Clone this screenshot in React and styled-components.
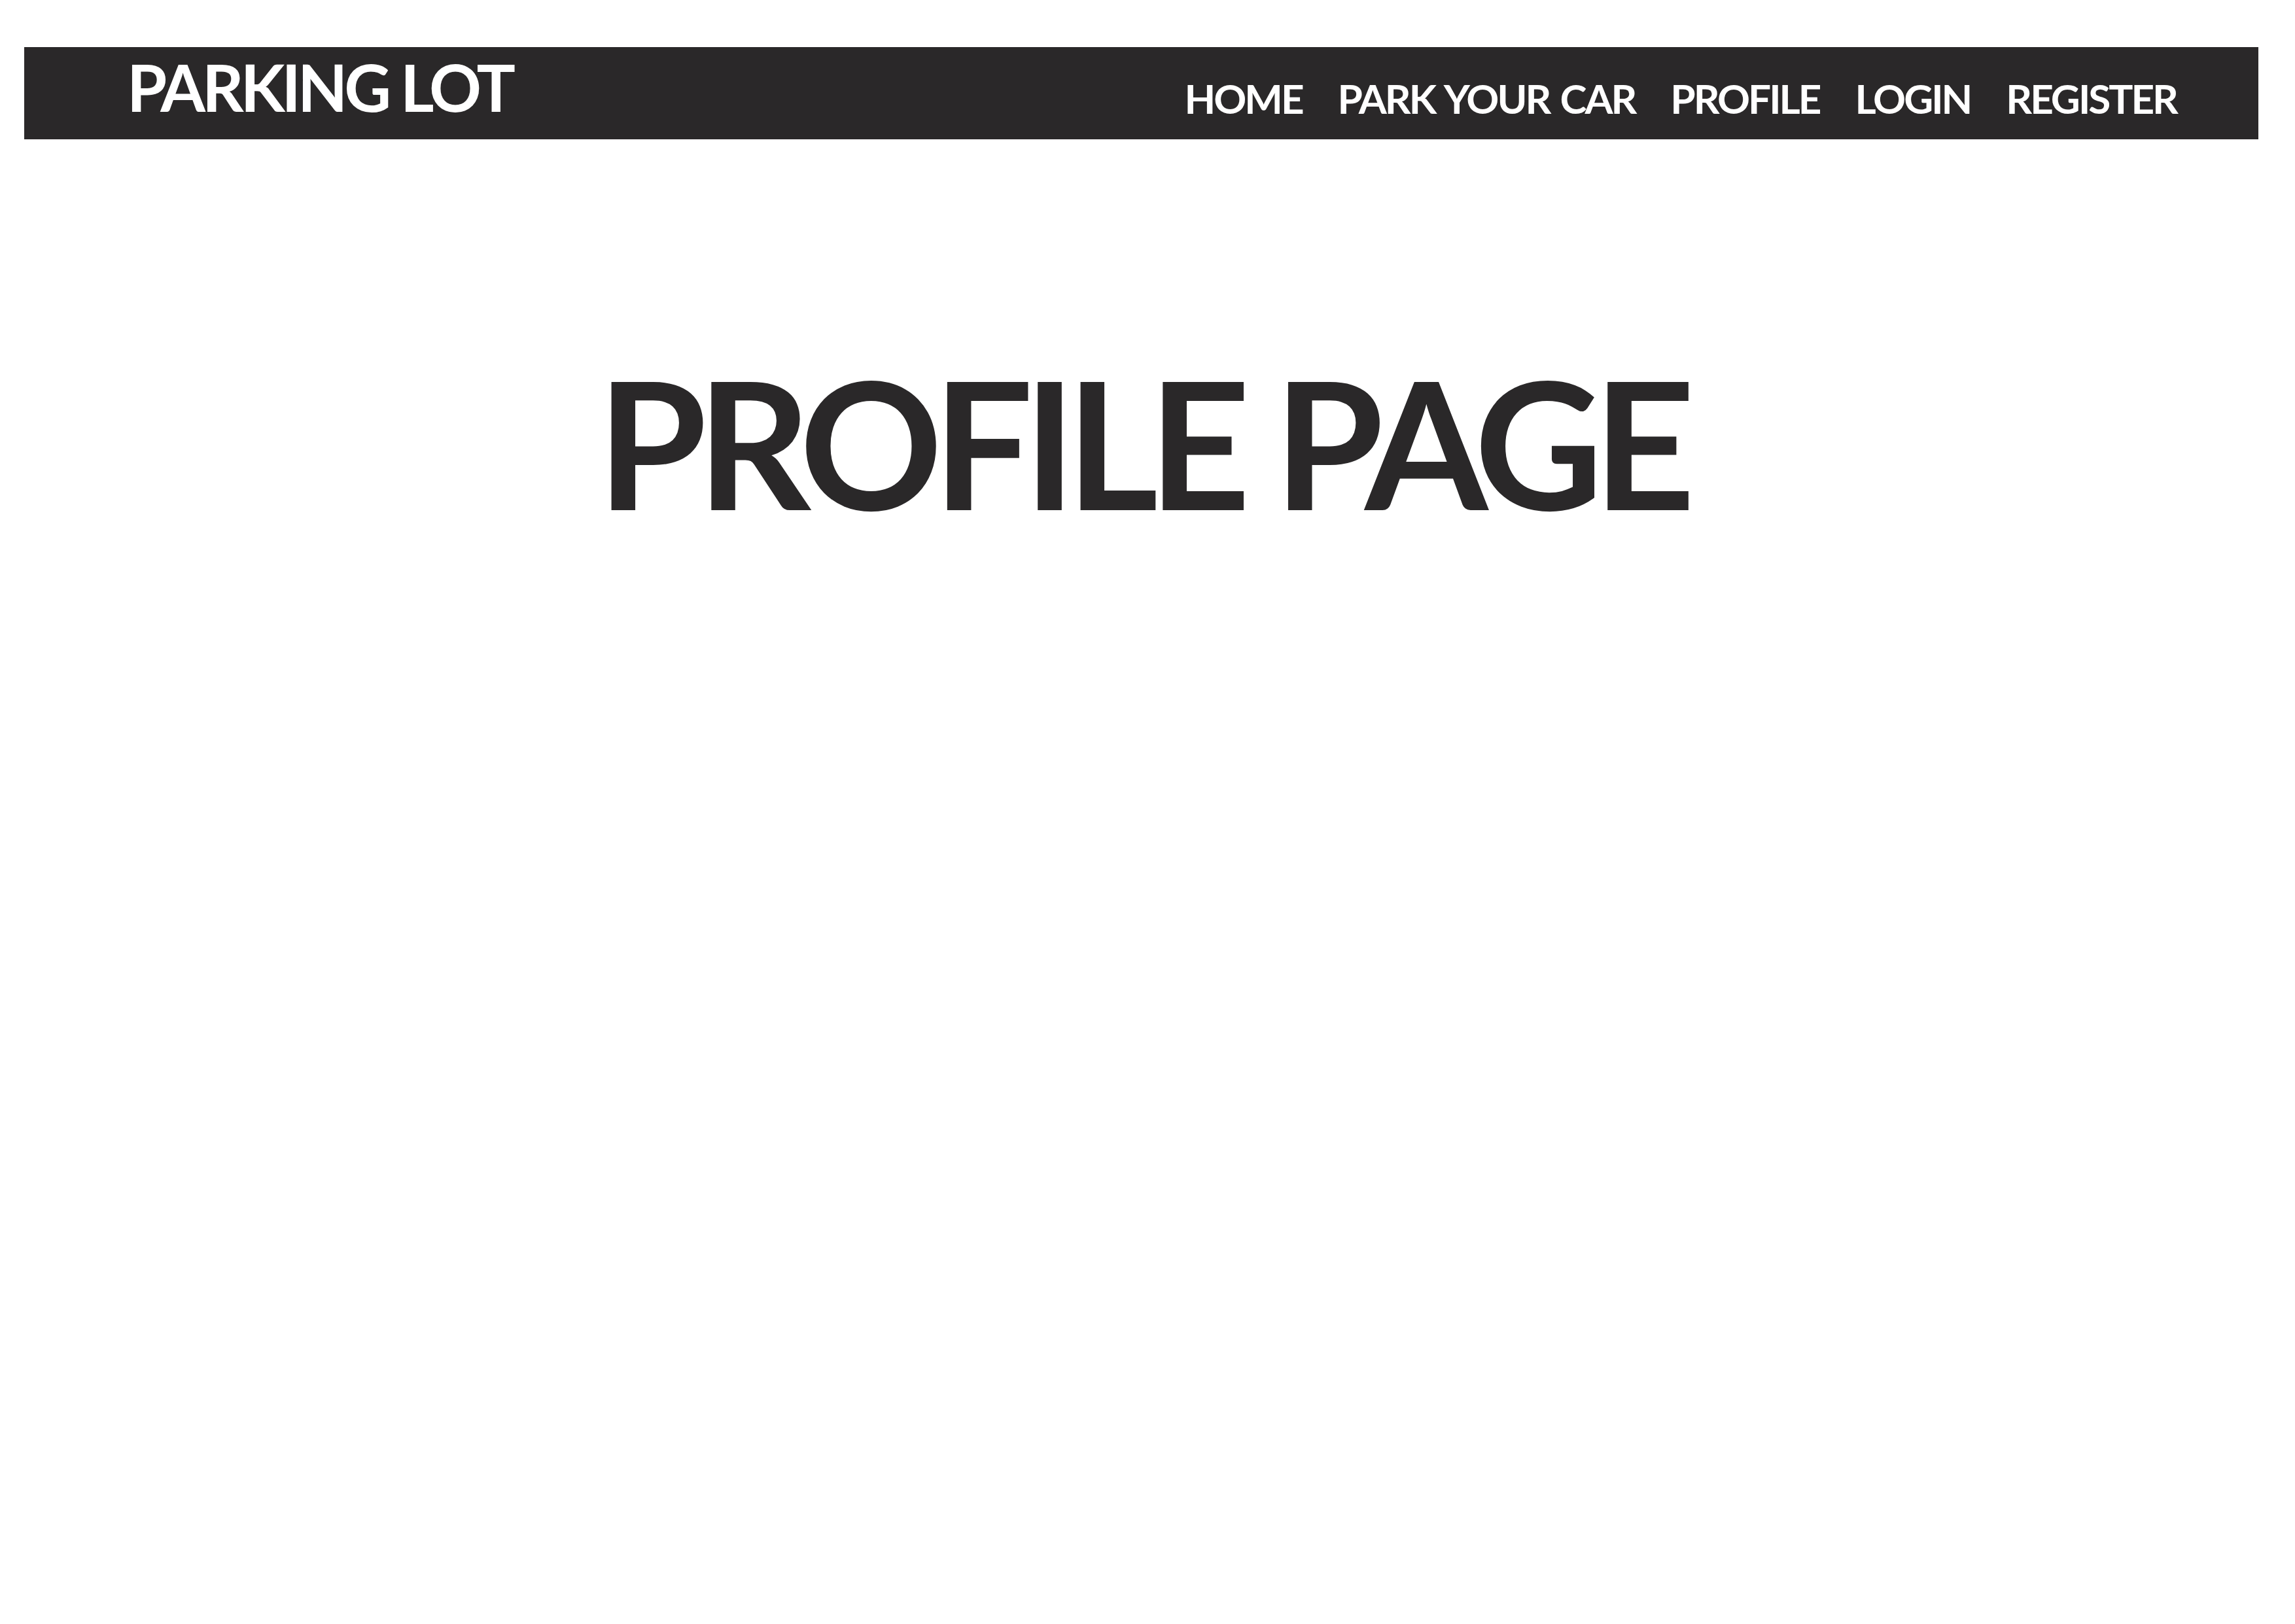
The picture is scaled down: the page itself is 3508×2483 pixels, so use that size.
import React from "react";
import styled, { createGlobalStyle } from "styled-components";

const GlobalStyle = createGlobalStyle`
  body {
    margin: 0;
    background: #ffffff;
    font-family: "Lato", "Liberation Sans", sans-serif;
  }
`;

const Page = styled.div`
  padding: 72px 56px 0px 37px;
`;

const Header = styled.header`
  display: flex;
  justify-content: space-between;
  align-items: flex-start;
  height: 141px;
  background: #2a2829;
  padding: 0px 125px 0px 157px;
`;

const Logo = styled.div`
  color: #ffffff;
  font-size: 99px;
  font-weight: 700;
  line-height: 1;
  letter-spacing: -5px;
  margin-top: 11px;
  white-space: nowrap;
`;

const Nav = styled.nav`
  display: flex;
  gap: 54px;
  margin-top: 47px;
`;

const NavLink = styled.a`
  color: #ffffff;
  font-size: 62px;
  font-weight: 700;
  line-height: 1;
  letter-spacing: -3px;
  word-spacing: 4px;
  text-decoration: none;
  white-space: nowrap;
`;

const Title = styled.h1`
  margin: 327px 0px 0px 0px;
  text-align: center;
  color: #2a2829;
  font-size: 271px;
  font-weight: 700;
  line-height: 1;
  letter-spacing: -15px;
`;

const links = ["HOME", "PARK YOUR CAR", "PROFILE", "LOGIN", "REGISTER"];

function App() {
  return (
    <>
      <GlobalStyle />
      <Page>
        <Header>
          <Logo>PARKING LOT</Logo>
          <Nav>
            {links.map(link => (
              <NavLink key={link} href="#">
                {link}
              </NavLink>
            ))}
          </Nav>
        </Header>
        <Title>PROFILE PAGE</Title>
      </Page>
    </>
  );
}

export default App;
